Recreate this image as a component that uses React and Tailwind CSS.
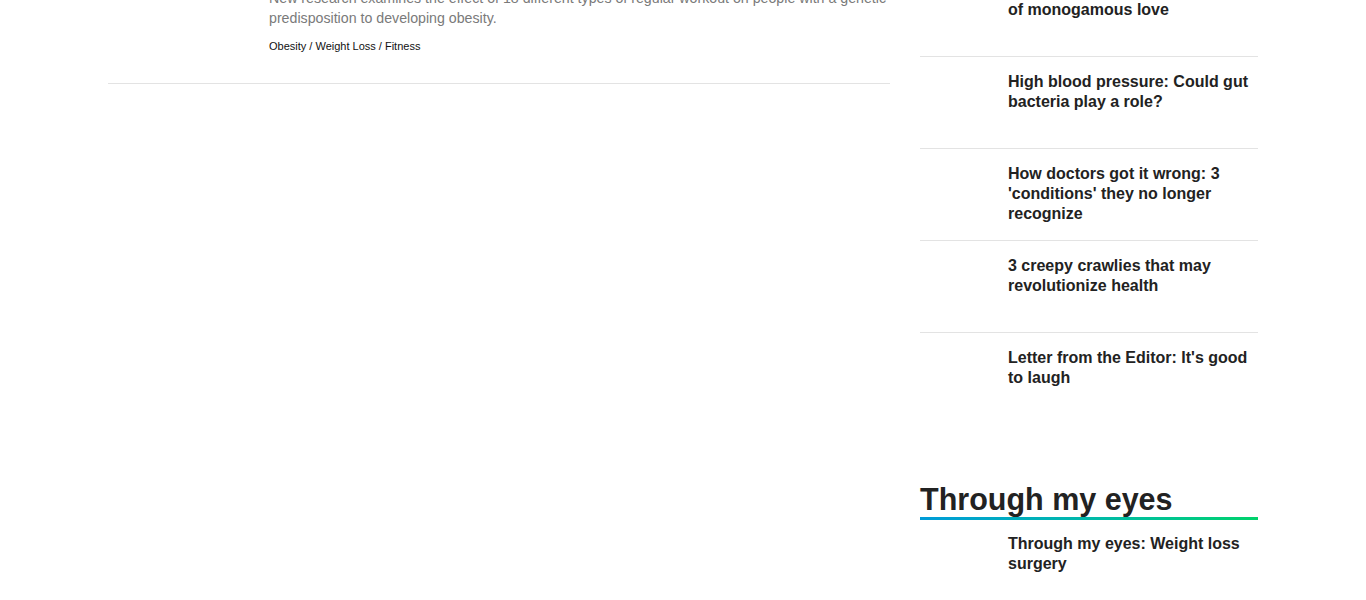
export default function App() {
  const items = [
    ["High blood pressure: Could gut bacteria play a role?"],
    ["How doctors got it wrong: 3 'conditions' they no longer recognize"],
    ["3 creepy crawlies that may revolutionize health"],
    ["Letter from the Editor: It's good to laugh"],
  ];
  return (
    <div className="bg-white overflow-hidden h-[600px]" style={{ fontFamily: '"Liberation Sans", Arial, sans-serif' }}>
      <div className="w-[1150px] mx-auto flex gap-[30px] mt-[-36px]">
        {/* left column */}
        <div className="w-[782px] shrink-0">
          <div className="flex gap-[16px] pt-[24px] pb-[30px] border-b border-[#e3e3e3]">
            <div className="w-[145px] shrink-0" />
            <div className="flex-1">
              <p className="text-[14.2px] leading-[20px] text-[#7a7a7a] font-light">
                New research examines the effect of 18 different types of regular workout on people with a genetic predisposition to developing obesity.
              </p>
              <div className="mt-[11px] text-[11px] leading-[14px] text-[#111]">
                Obesity / Weight Loss / Fitness
              </div>
            </div>
          </div>
        </div>

        {/* right column */}
        <div className="w-[338px] shrink-0">
          <div className="flex gap-[16px] pt-[15px] h-[92px] border-t border-[#e3e3e3]">
            <div className="w-[72px] shrink-0" />
            <div className="text-[16px] leading-[20px] font-bold text-[#222]">
              Valentine's Day: The science
              <br />
              of monogamous love
            </div>
          </div>
          {items.map(([t], i) => (
            <div key={i} className="flex gap-[16px] pt-[15px] h-[92px] border-t border-[#e3e3e3]">
              <div className="w-[72px] shrink-0" />
              <div className="text-[16px] leading-[20px] font-bold text-[#222]">{t}</div>
            </div>
          ))}
          <div className="mt-[57px]">
            <h2 className="text-[30.5px] leading-[36px] font-bold text-[#222]">Through my eyes</h2>
            <div className="h-[3px] bg-linear-to-r from-[#009bd8] to-[#00d26a]" />
          </div>
          <div className="flex gap-[16px] pt-[14px] h-[92px]">
            <div className="w-[72px] shrink-0" />
            <div className="text-[16px] leading-[20px] font-bold text-[#222]">Through my eyes: Weight loss surgery</div>
          </div>
        </div>
      </div>
    </div>
  );
}
